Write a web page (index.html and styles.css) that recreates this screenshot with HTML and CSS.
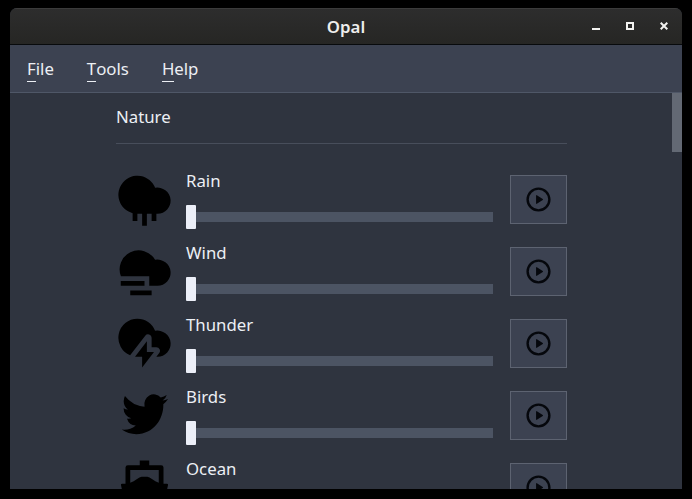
FILE: index.html
```html
<!DOCTYPE html>
<html lang="en">
<head>
<meta charset="utf-8">
<title>Opal</title>
<link rel="stylesheet" href="styles.css">
</head>
<body>
<div class="window">
  <header class="titlebar">
    <h1 class="title">Opal</h1>
    <div class="controls">
      <svg viewBox="0 0 8 8"><path d="M0 6h8v2H0z"/></svg>
      <svg viewBox="0 0 8 8"><path d="M0 0h8v8H0zM2 2v4h4V2z" fill-rule="evenodd"/></svg>
      <svg viewBox="0 0 8 8"><path d="M.7.7l6.6 6.6M7.3.7L.7 7.3" stroke="#f2f2f0" stroke-width="2"/></svg>
    </div>
  </header>
  <nav class="menubar">
    <span class="menu"><span class="key">F</span>ile</span>
    <span class="menu"><span class="key">T</span>ools</span>
    <span class="menu"><span class="key">H</span>elp</span>
  </nav>
  <main class="view">
    <div class="content">
      <h2 class="group">Nature</h2>
      <div class="row">
        <svg class="icon low" viewBox="0 0 24 24"><path d="M13 18v5h-2v-5H9v3H7v-3.252a8 8 0 1 1 9.458-10.65A5.5 5.5 0 1 1 17.5 18l-.5.001v3h-2v-3h-2z"/></svg>
        <div class="sound"><div class="name">Rain</div><div class="slider"><div class="thumb"></div></div></div>
        <div class="play"><svg viewBox="0 0 24 24"><use href="#play"/></svg></div>
      </div>
      <div class="row">
        <svg class="icon low" viewBox="0 0 24 24"><path d="M14 18v-3.993H2.074a8 8 0 0 1 14.383-6.908A5.5 5.5 0 1 1 17.5 18H14zm-8 2h9v2H6v-2zm-4-4h10v2H2v-2z"/></svg>
        <div class="sound"><div class="name">Wind</div><div class="slider"><div class="thumb"></div></div></div>
        <div class="play"><svg viewBox="0 0 24 24"><use href="#play"/></svg></div>
      </div>
      <div class="row">
        <svg class="icon" viewBox="0 0 24 24"><path d="M16.988 18l1.216-1.58a1.5 1.5 0 0 0-1.189-2.415H15v-3.976a1.5 1.5 0 0 0-2.69-.914l-6.365 8.281A8.002 8.002 0 0 1 9 2a8.003 8.003 0 0 1 7.458 5.099A5.5 5.5 0 1 1 17.5 18h-.512zM13 16.005h3l-5 6.5v-4.5H8l5-6.505v4.505z"/></svg>
        <div class="sound"><div class="name">Thunder</div><div class="slider"><div class="thumb"></div></div></div>
        <div class="play"><svg viewBox="0 0 24 24"><use href="#play"/></svg></div>
      </div>
      <div class="row">
        <svg class="icon" viewBox="-.75 .25 25.1 23.7" preserveAspectRatio="none"><path d="M22.162 5.656a8.384 8.384 0 0 1-2.402.658A4.196 4.196 0 0 0 21.6 4c-.82.488-1.719.83-2.656 1.015a4.182 4.182 0 0 0-7.126 3.814 11.874 11.874 0 0 1-8.62-4.37 4.168 4.168 0 0 0-.566 2.103c0 1.45.738 2.731 1.86 3.481a4.168 4.168 0 0 1-1.894-.523v.052a4.185 4.185 0 0 0 3.355 4.101 4.21 4.21 0 0 1-1.89.072A4.185 4.185 0 0 0 7.97 16.65a8.394 8.394 0 0 1-6.191 1.732 11.83 11.83 0 0 0 6.41 1.88c7.693 0 11.9-6.373 11.9-11.9 0-.18-.005-.362-.013-.54a8.496 8.496 0 0 0 2.087-2.165z"/></svg>
        <div class="sound"><div class="name">Birds</div><div class="slider"><div class="thumb"></div></div></div>
        <div class="play"><svg viewBox="0 0 24 24"><use href="#play"/></svg></div>
      </div>
      <div class="row">
        <svg class="icon" viewBox="0 0 24 24"><path fill-rule="evenodd" d="M4 10.8V4a1 1 0 0 1 1-1h5V1h4v2h5a1 1 0 0 1 1 1v6.8h1.4a.5.5 0 0 1 .5.6L20.5 18a5 5 0 0 1-4.500-2 5 5 0 0 1-8 0 5 5 0 0 1-4.500 2l-1.400-6.600a.5.5 0 0 1 .5-.6zM6 5v5.400Q7.500 9.800 8.700 8.900Q10 8 10.800 7.900h2.400Q14 8 15.300 8.900Q16.500 9.800 18 10.400V5z"/></svg>
        <div class="sound"><div class="name">Ocean</div><div class="slider"><div class="thumb"></div></div></div>
        <div class="play"><svg viewBox="0 0 24 24"><use href="#play"/></svg></div>
      </div>
    </div>
    <div class="scrollbar"><div class="grip"></div></div>
  </main>
</div>
<svg class="defs"><defs><path id="play" d="M12 22C6.477 22 2 17.523 2 12S6.477 2 12 2s10 4.477 10 10-4.477 10-10 10zm0-2a8 8 0 1 0 0-16 8 8 0 0 0 0 16zM10.622 8.415l4.879 3.252a.4.4 0 0 1 0 .666l-4.88 3.252a.4.4 0 0 1-.621-.332V8.747a.4.4 0 0 1 .622-.332z"/></defs></svg>
</body>
</html>
```
FILE: styles.css
```css
* { box-sizing: border-box; }
body {
  margin: 0;
  height: 499px;
  padding: 8px 10px 10px;
  overflow: hidden;
  background: #000;
  color: #eceff4;
  font: 16.8px/24px "Noto Sans", sans-serif;
}
.window {
  display: flex;
  flex-direction: column;
  height: 481px;
  overflow: hidden;
  border-radius: 7px 7px 0 0;
  background: #2f343f;
}
.titlebar {
  display: grid;
  grid-template-columns: 1fr auto 1fr;
  align-items: center;
  flex: none;
  height: 37px;
  border-top: 1px solid #3b3b3b;
  border-bottom: 1px solid #080a0c;
  background: linear-gradient(#2d2d2d, #262624);
}
.title {
  grid-column: 2;
  margin: 0;
  font-size: 16.8px;
  font-weight: 600;
  color: #eeeeec;
}
.controls {
  display: flex;
  justify-content: flex-end;
  gap: 26px;
  padding: 0 14px 2px 0;
}
.controls svg { width: 8px; height: 8px; fill: #f2f2f0; }
.menubar {
  display: flex;
  flex: none;
  gap: 33px;
  height: 48px;
  padding: 12px 17px;
  border-bottom: 1px solid #4f5767;
  background: #3c4251;
}
.key { display: inline-block; height: 25px; border-bottom: 1px solid #eceff4; }
.view { display: flex; flex: 1; min-height: 0; overflow: hidden; }
.content { flex: none; width: 451px; margin-left: 106px; }
.group {
  height: 51px;
  margin: 0 0 20px;
  padding-top: 12px;
  border-bottom: 1px solid #484e5b;
  font-size: 16.8px;
  font-weight: 400;
}
.row { display: flex; align-items: flex-start; height: 72px; padding-top: 5px; }
.icon { flex: none; width: 57px; height: 57px; margin-top: 1px; }
.low { margin-top: 2px; }
.sound { width: 307px; margin-left: 13px; }
.name { height: 36px; }
.slider { display: flex; align-items: center; height: 24px; background: linear-gradient(#4c5463, #4c5463) 0 7px / 100% 10px no-repeat; }
.thumb { width: 10px; height: 24px; border-radius: 1px; background: #eceff8; }
.play {
  display: flex;
  align-items: center;
  justify-content: center;
  width: 57px;
  height: 49px;
  margin: 6px 0 0 17px;
  border: 1px solid #5d6371;
  background: #3c4251;
}
.play svg { width: 29px; height: 29px; fill: #05070c; }
.scrollbar { flex: none; width: 10px; margin-left: auto; }
.grip { height: 59px; background: #636974; }
.defs { display: none; }
```
